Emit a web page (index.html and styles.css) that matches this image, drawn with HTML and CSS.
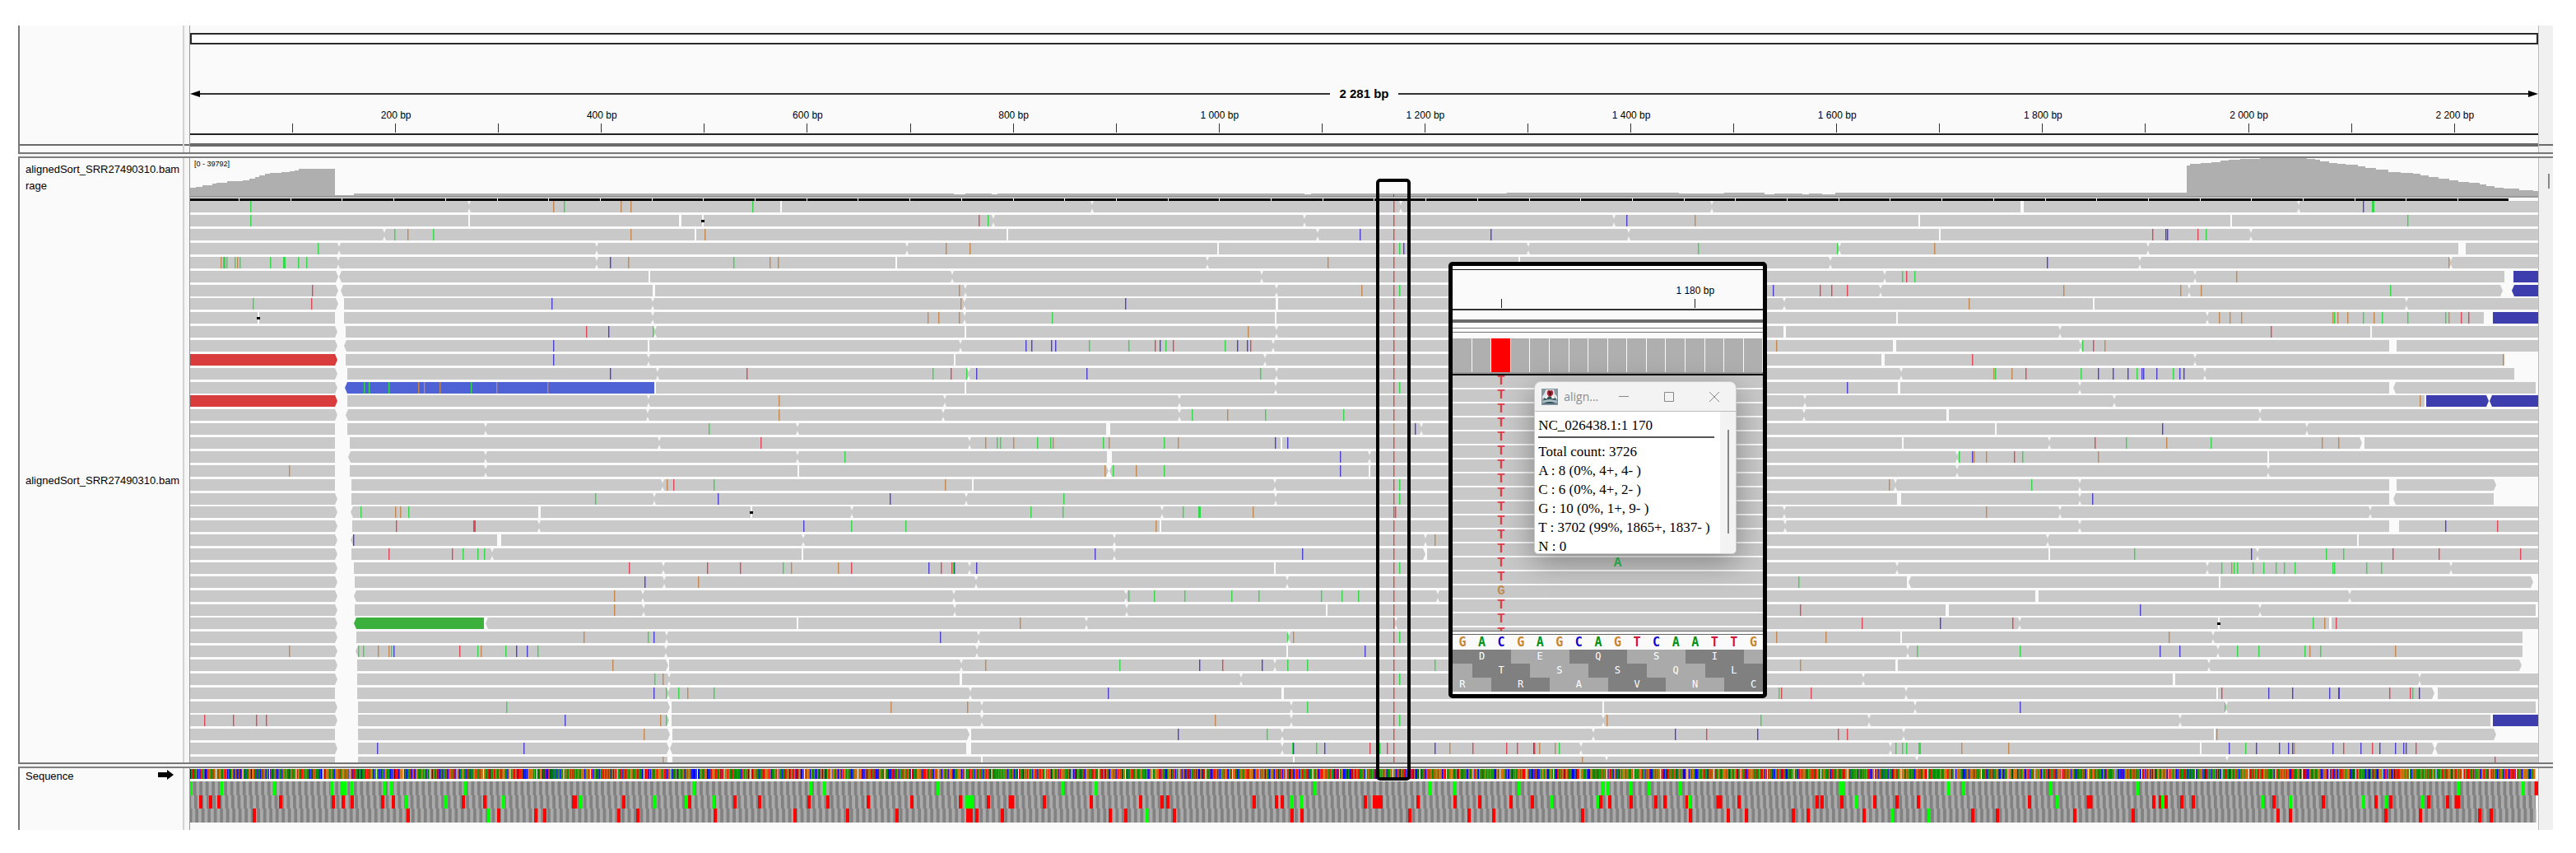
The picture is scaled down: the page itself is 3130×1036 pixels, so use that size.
FILE: index.html
```html
<!DOCTYPE html>
<html lang="en">
<head>
<meta charset="utf-8">
<meta name="viewport" content="width=device-width, initial-scale=1">
<title>Genome viewer - NC_026438.1</title>
<link rel="stylesheet" href="styles.css">
</head>
<body>
<main class="viewer">

  <section class="panel panel-header">
    <div class="names"></div>
    <div class="gutter"></div>
    <div class="track header-track">
      <div class="ideogram"></div>
      <div class="span">
        <svg class="tip" viewBox="0 0 12 8"><path d="M0 4 12 0V8Z"/></svg>
        <span class="line"></span>
        <strong>2 281 bp</strong>
        <span class="line"></span>
        <svg class="tip" viewBox="0 0 12 8"><path d="M12 4 0 0V8Z"/></svg>
      </div>
      <div class="axis labels">
        <span>200 bp</span><span>400 bp</span><span>600 bp</span><span>800 bp</span>
        <span>1 000 bp</span><span>1 200 bp</span><span>1 400 bp</span><span>1 600 bp</span>
        <span>1 800 bp</span><span>2 000 bp</span><span>2 200 bp</span>
      </div>
      <div class="axis ticks" id="ticks"></div>
    </div>
    <div class="scroll"></div>
  </section>

  <section class="panel panel-data">
    <div class="names">
      <p class="name-coverage">alignedSort_SRR27490310.bam<br>rage</p>
      <p class="name-reads">alignedSort_SRR27490310.bam</p>
    </div>
    <div class="gutter"></div>
    <div class="track">
      <div class="coverage">
        <svg id="coverage" viewBox="231 192 2853 48" preserveAspectRatio="none"></svg>
        <span class="range">[0 - 39792]</span>
      </div>
      <svg id="reads" viewBox="231 240 2853 686" preserveAspectRatio="none"></svg>
    </div>
    <div class="scroll"><span class="thumb"></span></div>
  </section>

  <section class="panel panel-sequence">
    <div class="names sequence-name">
      <span>Sequence</span>
      <svg viewBox="0 0 19 12" width="19" height="12"><path d="M0 3H11V0L19 6 11 12V9H0Z"/></svg>
    </div>
    <div class="gutter"></div>
    <div class="track">
      <svg id="sequence" viewBox="231 933 2853 67" preserveAspectRatio="none"></svg>
    </div>
    <div class="scroll"></div>
  </section>

  <div class="overlay">
    <div class="highlight"></div>
    <section class="inset">
      <div class="inset-top"></div>
      <div class="inset-axis cells">
        <i class="tick-a"></i><span>1 180 bp</span><i class="tick-b"></i>
      </div>
      <div class="inset-rule"></div>
      <div class="inset-split"></div>
      <div class="bars cells" id="bars"></div>
      <div class="inset-reads" id="inset-reads"></div>
      <div class="bases cells">
        <b class="G">G</b><b class="A">A</b><b class="C">C</b><b class="G">G</b><b class="A">A</b><b class="G">G</b><b class="C">C</b><b class="A">A</b><b class="G">G</b><b class="T">T</b><b class="C">C</b><b class="A">A</b><b class="A">A</b><b class="T">T</b><b class="T">T</b><b class="G">G</b>
      </div>
      <div class="amino cells">
        <span class="dark">D</span><span>E</span><span class="dark">Q</span><span>S</span><span class="dark">I</span><span class="one"></span>
      </div>
      <div class="amino cells">
        <span class="one"></span><span class="dark">T</span><span>S</span><span class="dark">S</span><span>Q</span><span class="dark">L</span>
      </div>
      <div class="amino cells amino-last">
        <span class="two first">R</span><span class="dark">R</span><span>A</span><span class="dark">V</span><span>N</span><span class="two last dark">C</span>
      </div>

      <section class="dialog">
        <header>
          <svg class="java" viewBox="0 0 20 20">
            <rect width="20" height="20" fill="#7d8f98"/>
            <path d="M1 1H19V13H1Z" fill="#dfe5e8"/>
            <path d="M0 0H6L3 7 0 10ZM15 0H20V11L16 6Z" fill="#8798a1"/>
            <path d="M2 12Q10 7 18 12L16 15H4Z" fill="#35525c"/>
            <path d="M7 4Q8 0 11 3 13 0 14 4 15 8 10 10 6 8 7 4Z" fill="#a82735"/>
            <path d="M10 2 12 5 11 9 9 6Z" fill="#4e111b"/>
            <path d="M5 9 8 8 7 12 4 12ZM13 8 16 12 12 12Z" fill="#f4f6f6"/>
            <path d="M1 15Q10 11 19 15V17H1Z" fill="#a9bcc0"/>
            <path d="M2 18Q10 14 18 18Z" fill="#274852"/>
          </svg>
          <h2>align...</h2>
          <button type="button" aria-label="Minimize"><svg viewBox="0 0 14 14"><path d="M1 6.500H13"/></svg></button>
          <button type="button" aria-label="Maximize"><svg viewBox="0 0 14 14"><path d="M1.500 1.500H12.500V12.500H1.500Z"/></svg></button>
          <button type="button" aria-label="Close"><svg viewBox="0 0 14 14"><path d="M1 1 13 13M13 1 1 13"/></svg></button>
        </header>
        <div class="dialog-body">
          <div class="dialog-text">
            <p>NC_026438.1:1 170</p>
            <hr>
            <p>Total count: 3726</p>
            <p>A : 8 (0%, 4+, 4- )</p>
            <p>C : 6 (0%, 4+, 2- )</p>
            <p>G : 10 (0%, 1+, 9- )</p>
            <p>T : 3702 (99%, 1865+, 1837- )</p>
            <p>N : 0</p>
          </div>
          <div class="dialog-scroll"><span></span></div>
        </div>
      </section>
    </section>
  </div>
</main>
<script src="tracks.js"></script>
</body>
</html>
```

FILE: styles.css
```css
* { box-sizing: border-box; }
body {
  margin: 0;
  padding: 31px 28px 28px 22px;
  background: #fff;
  color: #000;
  font: 13px/20px "Liberation Sans", Arial, sans-serif;
}
p, h2 { margin: 0; }
svg { display: block; }

.viewer {
  position: relative;
  display: flex;
  flex-direction: column;
  gap: 3px;
  background: #f3f3f3;
}
.panel {
  display: grid;
  grid-template-columns: 200px 9px minmax(0, 1fr) 18px;
  border-bottom: 2px solid #777;
}
.names { background: #fafafa; border-left: 2px solid #777; }
.gutter { background: #f6f6f6; border-left: 2px solid #d2d2d2; border-right: 1px solid #999; }
.track { min-width: 0; background: #fafafa; }
.track > svg, .coverage > svg { width: 100%; }
.scroll { background: #f0f0f0; border-left: 1px solid #bbb; }

/* Header with ruler */
.panel-header > * { height: 154px; }
.panel-header .names, .panel-header .gutter, .panel-header .scroll {
  background-image: linear-gradient(#6a6a6a, #6a6a6a);
  background-size: 100% 2px;
  background-position: 0 144px;
  background-repeat: no-repeat;
}
.header-track { padding-top: 9px; }
.ideogram { height: 14px; background: #fff; border: 2px solid #2a2a2a; }
.span { display: flex; align-items: center; height: 20px; margin-top: 50px; }
.span .tip { width: 12px; height: 8px; }
.span .line { flex: 1; height: 2px; background: #333; }
.span strong { font-size: 15px; padding: 0 11px; }
.axis { display: grid; grid-template-columns: repeat(22, 100fr) 81fr; }
.labels { height: 26px; padding-top: 6px; font-size: 12px; text-align: center; }
.labels span { grid-column-end: span 2; }
.labels span:first-child { grid-column: 2 / span 2; }
.labels span:last-child { padding-left: 24px; }
.ticks { height: 28px; border-bottom: 4px solid #6a6a6a; align-items: start; }
.ticks i { height: 14px; border-bottom: 2px solid #222; background: linear-gradient(#333, #333) right top / 1px 11px no-repeat; }
.ticks i:last-child { background: none; }

/* Coverage and alignments */
.panel-data, .panel-sequence { border-top: 2px solid #808080; }
.name-coverage { height: 382px; padding: 4px 0 0 7px; }
.name-reads { padding-left: 7px; }
.coverage { position: relative; }
#coverage { height: 48px; }
#reads { height: 686px; }
.range { position: absolute; left: 5px; top: 2px; font-size: 9px; line-height: 11px; }
.thumb { display: block; width: 2px; height: 18px; margin: 19px 0 0 11px; background: #888; }

/* Sequence */
.panel-sequence { border-bottom: 0; }
.panel-sequence > * { height: 75px; }
.sequence-name { display: flex; justify-content: space-between; padding: 0 11px 0 7px; }
.sequence-name svg { margin-top: 2px; }
#sequence { height: 67px; }

/* Marker box and magnified region */
.overlay { position: absolute; inset: 0 18px 0 209px; }
.highlight {
  position: absolute; left: 50.5%; top: 186px;
  width: 42px; height: 731px;
  border: 4px solid #000; border-radius: 5px;
}
.inset {
  position: absolute; left: 53.6%; top: 287px;
  width: 387px;
  border: 5px solid #000; border-radius: 5px;
  background: #fafafa;
}
.cells { display: grid; grid-template-columns: repeat(16, 1fr); }
.inset-top { height: 5px; border-bottom: 1px solid #111; }
.inset-axis { grid-template-rows: 35px 11px; height: 49px; border-bottom: 2px solid #333; font-size: 12px; text-align: center; }
.inset-axis span { grid-column: 11 / span 5; grid-row: 1; padding-top: 15px; }
.inset-axis i { grid-row: 2; justify-self: center; width: 1px; background: #222; }
.tick-a { grid-column: 3; }
.tick-b { grid-column: 13; }
.inset-rule { height: 15px; border-bottom: 4px solid #6a6a6a; }
.inset-split { height: 12px; margin-top: 6px; border-top: 1px solid #777; background: linear-gradient(#777, #777) 0 4px / 100% 1px no-repeat; }
.bars { height: 45px; margin-top: 1px; border-bottom: 2px solid #000; background: linear-gradient(#999, #999) bottom / 100% 2px no-repeat; }
.bars i { height: 41px; border-right: 1px solid #fafafa; background: #afafaf; }
.bars .snp { background: #f00; }
.inset-reads { height: 311px; overflow: hidden; border-bottom: 1px solid #666; }
.inset-reads div { height: 15px; margin-bottom: 2px; background: #c8c8c8; font: bold 16px/15px "Liberation Mono", monospace; text-align: center; color: #d8404c; }
.inset-reads span { grid-column: 3; }
.inset-reads .alt { color: #bd8e4f; }
.inset-reads .other { grid-column: 9; color: #2fc254; }
.bases { height: 19px; margin-top: 3px; border-top: 1px solid #666; font: bold 15px/19px "DejaVu Sans Mono", monospace; text-align: center; }
.A { color: #009218; }
.C { color: #1100cf; }
.G { color: #c8832b; }
.T { color: #d01230; }
.amino { height: 17px; font: 12px/17px "DejaVu Sans Mono", monospace; color: #fff; text-align: center; }
.amino-last { margin-bottom: 3px; }
.amino span { grid-column-end: span 3; background: #aaa; }
.amino .dark { background: #808080; }
.amino .one { grid-column-end: span 1; }
.amino .two { grid-column-end: span 2; }
.amino .first { padding-right: 24px; }
.amino .last { padding-left: 24px; }

/* Allele count dialog */
.dialog {
  position: absolute; left: 99px; top: 140px;
  width: 246px;
  overflow: hidden;
  border-radius: 8px 8px 5px 5px;
  background: #f3f3f3;
  border: 1px solid #ccc;
  box-shadow: 0 10px 36px rgba(0, 0, 0, .35);
}
.dialog header { display: flex; align-items: center; height: 36px; padding-left: 8px; border-bottom: 1px solid #bbb; }
.java { flex: 0 0 20px; height: 20px; }
.dialog h2 { flex: 0 0 73px; padding-left: 7px; font: 14px/20px "Open Sans", sans-serif; color: #8c8c8c; }
.dialog button { flex: 0 0 14px; height: 14px; margin-right: 41px; padding: 0; border: 0; background: none; }
.dialog button:last-child { margin-right: 0; }
.dialog button svg { width: 14px; height: 14px; fill: none; stroke: #888; }
.dialog-body { display: flex; height: 172px; overflow: hidden; }
.dialog-text { flex: 1; padding: 5px 0 0 4px; background: #fff; font: 17px/23px "Liberation Serif", "Times New Roman", serif; }
.dialog-text p { white-space: nowrap; }
.dialog-text hr { height: 2px; margin: 2px 7px 5px 0; border: 0; background: #555; }
.dialog-scroll { width: 19px; }
.dialog-scroll span { display: block; width: 2px; height: 126px; margin: 22px 0 0 9px; background: #888; }
```

FILE: tracks.js
```js
const NS = 'http://www.w3.org/2000/svg';
const LEFT = 231, RIGHT = 3084;

/* Mismatch colours: g = A, o = G, r = T, b = C */
const BASE = { g: '#34d84a', o: '#c48850', r: '#dc4858', b: '#4c40d0' };
const READ = { R: '#d83c3c', B: '#4e62d6', D: '#3d3dae', L: '#3cb03c' };

/* One string per row. _a-b gap, #Ca-b coloured read, w gap bar, n touching
   read ends, x deletion, other letters are mismatches (:n sets the width). */
const ROWS = [
  'g304 n570 o672 g685 o754 o766 g914 w949 n1327 n1702 n2080 w2457:4 n2793 b2871 g2882:3',
  'g304 w570 w826:3 x854 r1189 g1200 n1207 n1585 n1961 b1976 o2059 w2332 w2711 g2925',
  'n467 g479 o495 g526 o766 w845 o856 w1224 n1601 b1652 b1811 n1979 w2357 r2615 b2631 b2633 r2670 g2680 n2735',
  'g386 n412 n725 n1102 o1149 o1178 w1480 g1700 b1705 n1857 g2063 g2232 n2235 o2350 n2610 _2987-2996',
  'o268 g271:3 g275 g285 o288 g291 g328 g344:3 g362 g372 n411 n725 b741 o763 g891 o935 o945 w1089 n1467 o1613 w1846 n2224 b2487 n2600 o2975 n2978',
  '_>411-412< w789 n1157 n1533 n2290 g2311 r2316 g2326 n2667 o2717 #D3054-3084 _3043-3054',
  'r379 _>411-414< w794:3 o1165 n1173 n1551 o1654 g1700 b2154 r2211 r2225 r2244 n2285 o2507 o2649 n2660 o2674 g2904 #D3052-3084 _>3041-3052<',
  'g307 r378 _>411-418 b670 n793 o1167 n1172 b1367 w1551:3 n2168 o2392 w2544 n2924',
  'x314 _407-418 n793 o1127 o1140 o1165 n1172 g1278 w1550 w2305 n2682 o2696 o2709 o2723 o2834 g2836 o2840 o2852 g2871 o2884 g2894 g2925 g2971 o2975 r2990 r2999 #D3029-3084 _3018-3029',
  '_>410-420 r712 b739 g793 n796 w1173 o1516 n1551 w2168:3 n2503 r2759 w2881',
  '_>410-418< b672 w788 n1167 b1246 b1253 b1277 b1282 g1323 g1371 r1403 b1409 g1416 r1425 g1488 b1503 b1515 r1519 n1547 o2158 w2302:4 n2528 g2530 r2543 o2557 _2903-2912',
  '#R231-411 _>410-420 b672 n788 w1160 n1537 w2288:4 r2396 n2667 o3041 _3043-3084',
  '_>410-422 b741 n799 r907 g1133 r1155 g1174 n1177 b1186 b1320 g1531 n1551 n2310 o2422 g2424 o2444 r2461 g2528 b2549 b2567 b2585 g2596 b2602 b2604 b2620 g2640 b2648 b2653 n2679 _3055-3084',
  '#B419-795 _>410-419< g442 g448 g472 o508 o515 o534 g572 o603 o665 w796 w1173 n1550 g1700 b2244 w2307:3 n2527 _2903-2908< _3081-3084',
  '#R231-411 _>410-422 n788 o946 n1148 n1433 n2193 n2569 o2940 #D2948-3084 _2946-2948 _>3024-3025<',
  '_>410-420< n787 o946 n1146 n1433 g1448 o1491 g1537 g1632 n2192 w2366:3 n2746',
  '_407-422 n590 g861 n969 w1346:5 b1719 n1727 w2425 b2627 n2803',
  '_407-425 n801 r924 n1178 o1197 g1211 g1215 o1231 g1260 g1276 o1279 g1340 o1347 g1414 o1431 b1549 w1557 b1564 w2312 n2490 r2545 g2583 o2632 g2686 o2821 o2841 _>2870-2873',
  '_407-423< n590 n969 g1026 w1348:6 b1628 n1664 n2378 g2380 b2396 o2398 o2413 r2447 g2457 o2549 w2756',
  'o351 _407-425 n590 w970 o1342 _>1347-1348< g1352 o1380 g1414 b1628 w1664 n2378 n2756',
  '_407-427 n805 o810 r818 g867 o1148 w1182 n1549 g1700 o2295 n2303 g2468 n2527 _2903-2912 _>3033-3084',
  '_>410-427 g723 n795 b872 b1081 n1174 g1292 n1550 g1700 w2307:5 n2527 b2542 _2903-2908< _3030-3084',
  '_>410-426< g438 o480 o486 g496 w655:3 x913 n1035 g1252 g1291 n1412 g1437 g1456:3 o1522 r1695 n2168 o2413 n2503 n2880',
  '_>410-428 r481 r575:3 n655 b976 g1034 g1100 o1404 w1410 n2169 n2527 _2903-2915 b2971 r3034',
  '_>410-426< b429 w606:5 n976 n1354 n1732 o1743 n2488 w2865',
  '_>410-427 r472 r549 g562 g580 g588 n598 w975 b1330 n1354 b1582 _>1732-1734 w2490 g2593 b2735 n2743 g2826 g2847 r2907 r2963 r3062',
  '_>410-430 r764 n806 r859 r899 g951 o961 o1018 r1034 b1128 r1143 r1156 g1158 b1159 n1178 b1186 w1549 g1700 n2305 n2682 g2699 o2711 g2714 g2718 g2737 g2750 g2765 g2775 g2788 g2834 g2836 g2875 g2893 n2978',
  '_>410-431 b783 n807 o848 n1186 n1564 g2185 _2317-2319< w2697 _>3078-3084',
  '_>410-430< o746 n781 n1159 n1368 g1371 g1402 g1439 g1496 g1529 g1605 g1630 g1650 n1747 w2475:4 n2855',
  '_>410-431 o746 n782 n1160 n1369 w1612 r2187 w2366:4 b2600 n2746 _3081-3084',
  '#L430-589 _>410-430< _588-590< w969 o1239 n1320 n1696 r2262 b2357 r2445 n2454 x2696 g2810 o2824 w2831:3 r2838',
  '_>410-433 o709 g787 b794 n810 b1142 n1189 g1564 n1566 o1571 g1700 o2158 o2218 w2310 o2635 n2689 _3065-3084',
  'o351 _>410-432< g435 g441 o459 o472 g475 b478 r558 g580 o584 g614 b627 b640 g653 n809 n1187 w1564 b1658 n2318 g2329 g2454 b2624 b2648 n2695 g2718 g2744 g2800 o2806 g2819 o2910 _3065-3084',
  '_>410-434 o744 _>812-813 n1168 o1197 g1360 b1457 r1485 b1533 n1549 g1564 g1588 g1743 o2187 w2304:3 n2684 _>3064-3084',
  '_>410-434 g795 o805 n813 w1167:3 n1508 g1700 n2264 w2641:3 n2940',
  '_407-434 b794 g809 n812 g824 o835 g867 n1179 b1346 w1558:3 g2161 r2164 r2200 n2316 w2694 r2699 b2756 b2785 b2830 b2841:2 r2903 r2928 g2931 b2939 _>2958-2962',
  '_>410-435 g615 _>814-816 o1082 o1175 n1193 n1569 g1588 w1948 n2327 b2454 g2703 n2705 _3081-3084',
  'r248 r283 r311 r323 _>410-435 b686 o802 g809 _>813-816 n1193 o1476 n1569 g1700 n1948 o1952 g2139 n2271 n2649 #D3029-3084 _3026-3029',
  '_407-435 o782 _>814-817 _>1178-1180 b1431 g1539 n1558 n1936 b2035 r2073 b2135 r2233 r2244 n2313 w2691 o2693 _>3033-3084',
  '_>410-435 b458 b636 _>813-814< w1177:6 n1558 g1570 b1571 g1599 b1609 r1664 g1676 r1685 b1743 o1761 r1789 r1830 r1843 b1863 r1864 o1870 o1889 g1894 n1921 n2297 g2303 g2311 g2316 g2331:3 o2383 o2440 w2674 b2708 g2728 b2741 b2769 b2780 b2785 o2787 b2834 r2847 b2868 r2882 b2891 b2910 b2920 b2923 r2935 _>2958-2959<',
  '_407-435 o805 w814:6 w1193 w1572 o1922 n1952 n2329 n2706 r3031'
];

function add(svg, tag, attrs) {
  const el = document.createElementNS(NS, tag);
  for (const k in attrs) el.setAttribute(k, attrs[k]);
  svg.appendChild(el);
}
function rect(svg, x, y, width, height, fill) {
  add(svg, 'rect', { x, y, width, height, fill });
}
function poly(svg, points, fill) { add(svg, 'polygon', { points, fill }); }

function drawReads() {
  const svg = document.getElementById('reads'), H = 14, BG = '#fafafa';
  rect(svg, LEFT, 241, 3048 - LEFT, 3, '#000');
  for (let k = 0; k < 45; k++) rect(svg, Math.round(290 + k * 62.7), 241, 1, 3, '#fff');
  ROWS.forEach((row, i) => {
    const y = Math.round(244.3 + i * 16.87), m = y + H / 2, b = y + H;
    rect(svg, LEFT, y, RIGHT - LEFT, H, '#c9c9c9');
    const tokens = row.split(' ');
    const order = t => t[0] === '#' ? 0 : 1;
    tokens.sort((p, q) => order(p) - order(q));
    for (const t of tokens) {
      const kind = t[0];
      if (kind === '#') {
        const [a, c] = t.slice(2).split('-').map(Number);
        rect(svg, a, y, c - a, H, READ[t[1]]);
      } else if (kind === '_') {
        const [, l, a, c, r] = t.match(/_(>?)(\d+)-(\d+)(<?)/);
        const p = l ? a - 3 : +a, q = r ? +c + 3 : +c;
        poly(svg, `${p},${y} ${q},${y} ${c},${m} ${q},${b} ${p},${b} ${a},${m}`, BG);
      } else {
        const [x, w] = t.slice(1).split(':').map(Number);
        if (kind === 'w') rect(svg, x - Math.floor((w || 2) / 2), y, w || 2, H, BG);
        else if (kind === 'n') {
          poly(svg, `${x - 2},${y} ${x + 2},${y} ${x},${y + 5}`, '#f4f4f4');
          poly(svg, `${x - 2},${b} ${x + 2},${b} ${x},${b - 5}`, '#f4f4f4');
        } else if (kind === 'x') {
          rect(svg, x - 1, y, 2, H, BG);
          rect(svg, x - 2, y + 6, 4, 3, '#000');
        } else rect(svg, x, y, w || 1.4, H, BASE[kind]);
      }
    }
    rect(svg, 1693, y, 1.4, H, i === 16 ? BASE.o : '#dd4a4a');
  });
}

function drawCoverage() {
  const svg = document.getElementById('coverage');
  const steps = [[231, 228], [238, 227], [246, 225], [258, 223], [263, 222], [276, 220], [295, 219], [303, 217],
    [310, 215], [315, 213], [322, 211], [328, 210], [342, 209], [352, 208], [358, 207], [363, 205], [407, 237],
    [430, 235], [1159, 236], [1173, 235], [1205, 236], [1212, 235], [1585, 236], [1593, 235], [1831, 234],
    [2040, 235], [2095, 234], [2144, 236], [2156, 235], [2190, 236], [2198, 235], [2214, 236], [2230, 234],
    [2657, 201], [2661, 199], [2674, 198], [2687, 197], [2698, 195], [2708, 194], [2722, 193], [2746, 192],
    [2803, 193], [2813, 194], [2819, 196], [2830, 198], [2840, 199], [2850, 200], [2865, 202], [2874, 204],
    [2887, 206], [2902, 209], [2917, 210], [2932, 211], [2941, 213], [2951, 215], [2963, 217], [2976, 219],
    [2987, 221], [3000, 222], [3013, 224], [3021, 226], [3031, 228], [3042, 229], [3061, 231], [3078, 232]];
  steps.forEach(([x, y], i) => {
    const next = i + 1 < steps.length ? steps[i + 1][0] : RIGHT;
    rect(svg, x, y, next - x, 239 - y, '#afafaf');
  });
  rect(svg, LEFT, 238, RIGHT - LEFT, 2, '#999');
  rect(svg, 1693, 236, 1, 3, '#a33');
}

/* Start (g) and stop (r) codons in the three reading frames. */
const FRAMES = [
  'g232 g269 g333 g403 g417:8 g427 g467 g476 g565 g843 g985 g1002 g1140 g1291 g1332 g1598 g1737 g1767 g1846 g1947 g1954 g1981 g2004 g2041 g2238:7 g2368 g2386 g2492 g2597 g2987 g3066 r3082',
  'r244 r256 r266 r341 r405 r417 r428 r465 r478 r563 r589 r698:6 r758 g494 g541 g612 g706 g795 r838 r893 r923 r983 r1006 r1055 r1108 r1167 r1201 r1229:7 r1269 r1326 r1386 r1412 r1419 r1524 r1551 r1558 g796 g834 g867 g1178:11 g1569 g1581 r1659 r1674:12 r1723 r1768 r1798 r1836 r1862 g1942 r1945 r1956 r1982 r2012 r2023 r2050 r2089:7 r2113 g1885 g2053 r2208 r2214 r2238 r2278 r2305 r2331 r2466 r2539:7 r2617 r2625 r2632 r2651 r2665 r2763 r2823 r2887 r2905 r2951 r2974 r2986:7 g2256 g2500 g2628 g2749 g2783 g2872 g2899 g2944',
  'r309 r496 r606 r651 r662 r752 r775 g594 r869 r966 r1030 r1090 r1178:8 r1187 r1218 r1349 r1368 r1427 r1570 r1582 g1394 r1713 r1785 r1815 r1923 r2054 r2100 r2122 r2179 r2197 r2265 r2397 r2427 r2521 r2592 r2768 r2783 r2899 r2941 r3013 r3027 g2299 g2344'
];

function drawSequence() {
  const svg = document.getElementById('sequence');
  const colors = ['#009000', '#0000ff', '#ff0000', '#d17105', '#009000', '#c06a10'];
  let seed = 26438;
  const pxPerBase = (RIGHT - LEFT) / 2281;
  for (let i = 0; i < 2278; i++) {
    seed = (seed * 1103515245 + 12345) % 2147483648;
    rect(svg, LEFT + i * pxPerBase, 934, pxPerBase + 0.3, 12, colors[Math.floor(seed / 65536) % 6]);
  }
  for (let x = 262; x < RIGHT; x += 32.5) rect(svg, x, 934, 1, 12, '#fff');
  FRAMES.forEach((frame, f) => {
    const y = 949 + f * 17 - (f === 2 ? 1 : 0), h = 17;
    rect(svg, LEFT, y, RIGHT - LEFT - 3, h, '#828282');
    for (let x = LEFT + f * pxPerBase; x < RIGHT - 6; x += pxPerBase * 6) rect(svg, x, y, pxPerBase * 3, h, '#aaa');
    for (const t of frame.split(' ')) {
      const [x, w = 4] = t.slice(1).split(':').map(Number);
      rect(svg, x - w / 2, y, w, h, t[0] === 'g' ? '#00ff00' : '#ff0000');
    }
  });
}

function fill(id, n, make) {
  document.getElementById(id).innerHTML = Array.from({ length: n }, (_, i) => make(i)).join('');
}

fill('ticks', 23, () => '<i></i>');
fill('bars', 16, i => `<i${i === 2 ? ' class="snp"' : ''}></i>`);
fill('inset-reads', 19, i => `<div class="cells"><span${i === 15 ? ' class="alt">G' : '>T'}</span>${i === 13 ? '<span class="other">A</span>' : ''}</div>`);
drawCoverage();
drawReads();
drawSequence();
```
